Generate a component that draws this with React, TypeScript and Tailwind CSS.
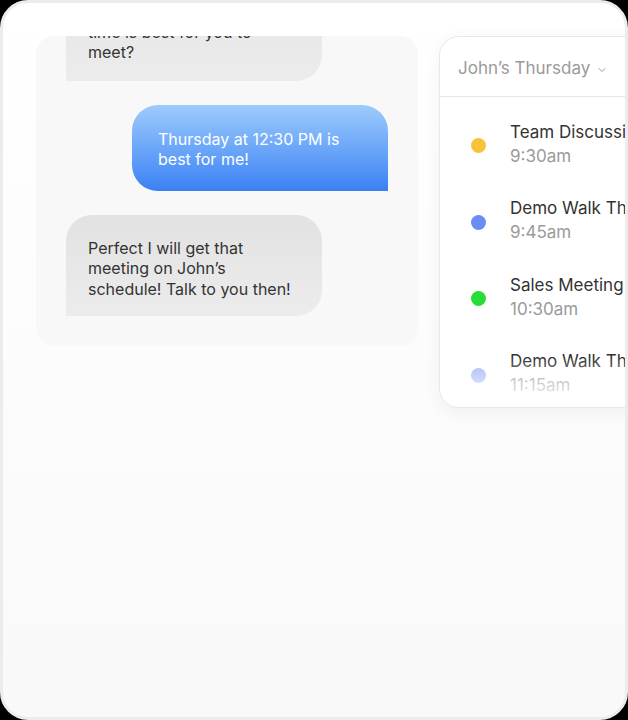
import React from 'react';
import { ChevronDown } from 'lucide-react';

const events = [
  { title: 'Team Discussion', time: '9:30am', dot: 'bg-[#f8c23a]' },
  { title: 'Demo Walk Through', time: '9:45am', dot: 'bg-[#6b8bf5]' },
  { title: 'Sales Meeting', time: '10:30am', dot: 'bg-[#27dd38]' },
  { title: 'Demo Walk Through', time: '11:15am', dot: 'bg-[#a3b6f8]' },
];

const ChatPanel: React.FC = () => (
  <div className="flex h-[310px] w-[382px] shrink-0 flex-col overflow-hidden rounded-[18px] bg-[#f8f8f8] px-[30px] text-[16px] leading-[20.5px]">
    <div className="mt-[-57px] w-[256px] rounded-tl-[26px] rounded-tr-[26px] rounded-br-[26px] bg-gradient-to-b from-[#e4e4e4] to-[#ececec] px-[22px] pt-[22px] pb-[18px] text-[#333333]">
      What day and
      <br />
      time is best for you to
      <br />
      meet?
    </div>
    <div className="mt-[24px] ml-auto w-[256px] rounded-tl-[26px] rounded-tr-[26px] rounded-bl-[26px] bg-gradient-to-b from-[#9dcbfb] to-[#3a80f4] px-[26px] pt-[24px] pb-[22px] leading-[20px] text-white">
      Thursday at 12:30 PM is
      <br />
      best for me!
    </div>
    <div className="mt-[24px] w-[256px] rounded-tl-[26px] rounded-tr-[26px] rounded-br-[26px] bg-gradient-to-b from-[#e2e2e2] to-[#ececec] px-[22px] pt-[23px] pb-[17px] text-[#333333]">
      Perfect I will get that
      <br />
      meeting on John’s
      <br />
      schedule! Talk to you then!
    </div>
  </div>
);

const CalendarPanel: React.FC = () => (
  <div className="relative h-[372px] w-[260px] shrink-0 overflow-hidden rounded-[20px] border border-[#e8e8e8] bg-white shadow-[0_4px_18px_rgba(0,0,0,0.05)]">
    <div className="flex h-[60px] items-center gap-[6px] border-b border-[#e6e6e6] pt-[4px] pl-[18px] text-[17px] text-[#9a9a9a]">
      <span>John’s Thursday</span>
      <ChevronDown size={12} strokeWidth={2} className="mt-[2px] text-[#9a9a9a]" />
    </div>
    <div className="flex flex-col gap-[28.5px] pt-[22.5px] pl-[31px]">
      {events.map((e, i) => (
        <div key={i} className="flex items-center gap-[24px] whitespace-nowrap">
          <span className={`mt-[4px] h-[15px] w-[15px] shrink-0 rounded-full ${e.dot}`} />
          <div className="flex flex-col text-[17px] leading-[24px]">
            <span className="text-[#333333]">{e.title}</span>
            <span className="text-[#9a9a9a]">{e.time}</span>
          </div>
        </div>
      ))}
    </div>
    <div className="pointer-events-none absolute inset-x-0 bottom-0 h-[50px] bg-gradient-to-b from-white/0 to-white" />
  </div>
);

export default function App() {
  return (
    <div className="h-[720px] w-[628px] bg-black" style={{ fontFamily: 'Inter, "Liberation Sans", sans-serif' }}>
      <div className="h-full w-full overflow-hidden rounded-[28px] border-[3px] border-[#ececec] bg-gradient-to-b from-white to-[#f9f9f9]">
        <div className="flex items-start gap-[21px] pt-[33px] pl-[33px]">
          <ChatPanel />
          <CalendarPanel />
        </div>
      </div>
    </div>
  );
}
